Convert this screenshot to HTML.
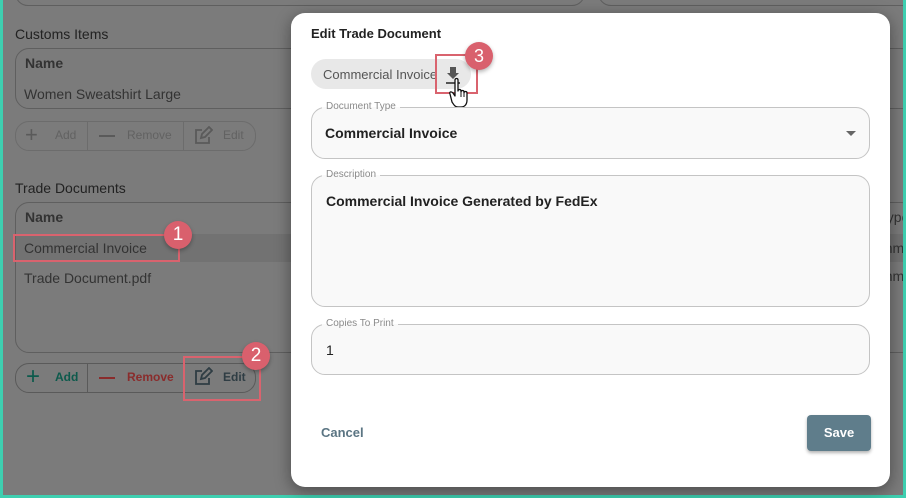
<!DOCTYPE html>
<html><head><meta charset="utf-8"><style>
*{box-sizing:border-box;margin:0;padding:0}
body{width:906px;height:498px;overflow:hidden;background:#3ecfb0;font-family:"Liberation Sans",sans-serif;position:relative}
.bg{position:absolute;left:3px;top:0;width:900px;height:495px;background:#7b7b7b;overflow:hidden}
.a{position:absolute}
.t{color:#2a2a2a;font-size:14px}
.box{border:1px solid #5f5f5f;border-radius:14px}
.modal{position:absolute;left:291px;top:13px;width:599px;height:474px;background:#fff;border-radius:14px;box-shadow:0 4px 16px rgba(0,0,0,.4)}
.f{position:absolute;border:1px solid #c4c4c4;border-radius:14px;background:#f9f9f9}
.lbl{position:absolute;font-size:10px;color:#8a8a8a;padding:0 4px;left:10px;top:-7px;line-height:12px;background:linear-gradient(#fff 50%,#f9f9f9 50%)}
.badge{position:absolute;width:28px;height:28px;border-radius:50%;background:#d9606d;color:#fff;font-size:19px;text-align:center;line-height:28px;box-shadow:0 2px 4px rgba(0,0,0,.3)}
.hl{position:absolute;border:2px solid #d9636e}
</style></head><body>
<div class="bg">
  <div class="a box" style="left:12px;top:-20px;width:570px;height:26px"></div>
  <div class="a box" style="left:595px;top:-20px;width:400px;height:26px"></div>
  <div class="a t" style="left:12px;top:26px;font-size:14px;color:#222">Customs Items</div>
  <div class="a box" style="left:12px;top:48px;width:900px;height:61px"></div>
  <div class="a t" style="left:22px;top:55px;font-weight:bold;color:#333">Name</div>
  <div class="a t" style="left:21px;top:86px;color:#333">Women Sweatshirt Large</div>
  <div class="a box" style="left:12px;top:121px;width:241px;height:30px;border-color:#6c6c6c"></div>
  <div class="a" style="left:84px;top:121px;width:1px;height:30px;background:#6c6c6c"></div>
  <div class="a" style="left:180px;top:121px;width:1px;height:30px;background:#6c6c6c"></div>
  <div class="a" style="left:22px;top:122px;font-size:22px;color:#5a5a5a">+</div>
  <div class="a" style="left:52px;top:128px;font-size:12px;color:#626262">Add</div>
  <div class="a" style="left:96px;top:135px;width:16px;height:2px;background:#5a5a5a"></div>
  <div class="a" style="left:124px;top:128px;font-size:12px;color:#626262">Remove</div>
  <svg class="a" style="left:190px;top:126px" width="20" height="20" viewBox="0 0 20 20" fill="none" stroke="#5a5a5a" stroke-width="1.8"><path d="M9 4H3v13h13v-6"/><path d="M8 12l1-4 7-7 3 3-7 7z"/></svg>
  <div class="a" style="left:220px;top:128px;font-size:12px;color:#626262">Edit</div>

  <div class="a t" style="left:12px;top:180px;color:#222">Trade Documents</div>
  <div class="a box" style="left:12px;top:202px;width:900px;height:151px"></div>
  <div class="a t" style="left:22px;top:209px;font-weight:bold;color:#333">Name</div>
  <div class="a" style="left:13px;top:234px;width:890px;height:28px;background:#727272"></div>
  <div class="a t" style="left:21px;top:240px;color:#333">Commercial Invoice</div>
  <div class="a t" style="left:21px;top:270px;color:#333">Trade Document.pdf</div>
  <div class="a" style="left:876px;top:209px;font-size:14px;color:#333">Type</div>
  <div class="a" style="left:860px;top:240px;font-size:14px;color:#333">Comm</div>
  <div class="a" style="left:860px;top:268px;font-size:14px;color:#333">Comm</div>
  <div class="a box" style="left:12px;top:363px;width:241px;height:30px;border-color:#5a5a5a"></div>
  <div class="a" style="left:84px;top:363px;width:1px;height:30px;background:#5a5a5a"></div>
  <div class="a" style="left:23px;top:363px;font-size:24px;color:#0d5a4c">+</div>
  <div class="a" style="left:52px;top:370px;font-size:12px;font-weight:bold;color:#0d5a4c">Add</div>
  <div class="a" style="left:96px;top:377px;width:16px;height:2px;background:#8a2c2c"></div>
  <div class="a" style="left:124px;top:370px;font-size:12px;font-weight:bold;color:#8a2c2c">Remove</div>
  <svg class="a" style="left:190px;top:367px" width="20" height="20" viewBox="0 0 20 20" fill="none" stroke="#2f3d44" stroke-width="1.8"><path d="M9 4H3v13h13v-6"/><path d="M8 12l1-4 7-7 3 3-7 7z"/></svg>
  <div class="a" style="left:220px;top:370px;font-size:12px;font-weight:bold;color:#2f3d44">Edit</div>
</div>
<div class="hl" style="left:13px;top:234px;width:167px;height:28px"></div>
<div class="badge" style="left:164px;top:221px">1</div>
<div class="hl" style="left:183px;top:356px;width:78px;height:45px"></div>
<div class="badge" style="left:242px;top:342px">2</div>

<div class="modal">
  <div class="a" style="left:20px;top:13px;font-size:13px;font-weight:bold;color:#222">Edit Trade Document</div>
  <div class="a" style="left:20px;top:46px;width:160px;height:30px;border-radius:15px;background:#e8e8e8"></div>
  <div class="a" style="left:32px;top:54px;font-size:13px;color:#555">Commercial Invoice</div>
  <svg class="a" style="left:154px;top:52px" width="16" height="20" viewBox="0 0 16 20"><path d="M5 2h6v6h3l-6 6-6-6h3z" fill="#555"/><rect x="1" y="17" width="14" height="2" fill="#555"/></svg>
  <div class="hl" style="left:144px;top:41px;width:43px;height:40px"></div>
  <div class="badge" style="left:174px;top:29px;font-size:18px">3</div>
  <svg class="a" style="left:158px;top:64px" width="28" height="32" viewBox="0 0 28 32"><path d="M6 3c0-2 3-2 3 0v11c0-2 3-2 3 0v1c0-2 3-2 3 0v1c0-2 3-2 3 0v7c0 4-2 7-6 7H9c-3 0-4-2-6-5L1 17c-1-2 1-3 3-1l2 3z" fill="#fff" stroke="#111" stroke-width="1.3" stroke-linejoin="round"/><path d="M12 15v5M15 16v4" stroke="#111" stroke-width="1"/></svg>

  <div class="f" style="left:20px;top:94px;width:559px;height:52px"><div class="lbl">Document Type</div>
    <div class="a" style="left:13px;top:17px;font-size:14px;font-weight:bold;color:#222">Commercial Invoice</div>
    <div class="a" style="left:534px;top:23px;width:0;height:0;border-left:5px solid transparent;border-right:5px solid transparent;border-top:5px solid #666"></div></div>
  <div class="f" style="left:20px;top:162px;width:559px;height:132px"><div class="lbl">Description</div>
    <div class="a" style="left:14px;top:17px;font-size:14px;font-weight:bold;color:#222">Commercial Invoice Generated by FedEx</div></div>
  <div class="f" style="left:20px;top:311px;width:559px;height:51px"><div class="lbl">Copies To Print</div>
    <div class="a" style="left:14px;top:17px;font-size:14px;color:#222">1</div></div>
  <div class="a" style="left:30px;top:412px;font-size:13px;font-weight:bold;color:#5b7583">Cancel</div>
  <div class="a" style="left:516px;top:402px;width:64px;height:36px;border-radius:4px;background:#5f7d8b;color:#fff;font-size:13px;font-weight:bold;text-align:center;line-height:36px;box-shadow:0 2px 3px rgba(0,0,0,.3)">Save</div>
</div>
</body></html>
